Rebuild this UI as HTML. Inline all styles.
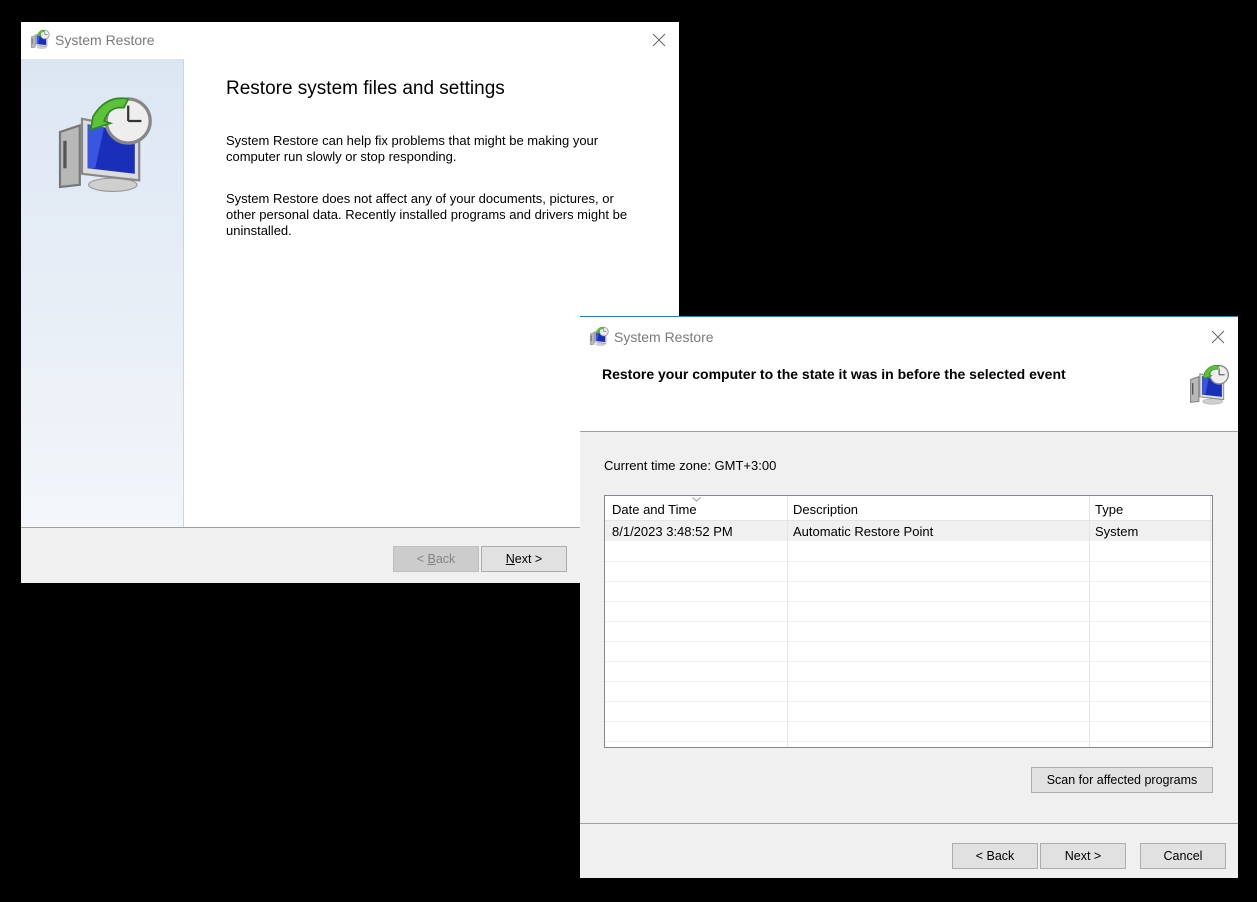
<!DOCTYPE html>
<html><head><meta charset="utf-8"><style>
*{margin:0;padding:0;box-sizing:border-box}
body{width:1257px;height:902px;background:#000;position:relative;overflow:hidden;font-family:"Liberation Sans",sans-serif;font-size:12px;color:#000}
.abs{position:absolute}
.btn{position:absolute;height:26px;background:#e1e1e1;border:1px solid #adadad;text-align:center;line-height:24px;font-size:12.5px}
.title{color:#7a7a7a;font-size:14px}
.gl{position:absolute;left:0;right:0;height:1px;background:#f0f0f0}
.t{font-size:13px}
</style></head><body>
<svg width="0" height="0" style="position:absolute"><defs>
<symbol id="ico" viewBox="0 0 100 100">
<path d="M10 40 L28 34 L28 88 L10 90 Z" fill="#b8b8b8" stroke="#777" stroke-width="2"/>
<rect x="13" y="48" width="3" height="25" fill="#555"/>
<ellipse cx="58" cy="88" rx="22" ry="6" fill="#cfcfcf" stroke="#999"/>
<path d="M30 28 L82 38 L82 84 L30 78 Z" fill="#ddd" stroke="#888" stroke-width="2"/>
<path d="M35 33 L78 41 L78 78 L35 73 Z" fill="#1a2fb8"/>
<path d="M35 33 L50 36 L42 73 L35 73 Z" fill="#3a55e0"/>
<circle cx="72" cy="30" r="20" fill="#eee" stroke="#888" stroke-width="3"/>
<path d="M72 30 L72 16 M72 30 L84 30" stroke="#333" stroke-width="2"/>
<path d="M40 26 Q52 6 72 10 L68 18 Q55 16 50 30 L56 32 L38 38 Z" fill="#5cc23a" stroke="#2f8a1e" stroke-width="1.5"/>
</symbol>
<symbol id="x" viewBox="0 0 14 14"><path d="M1 1 L13 13 M13 1 L1 13" stroke="#666" stroke-width="1"/></symbol>
</defs></svg>

<!-- Window 1 -->
<div class="abs" style="left:21px;top:22px;width:658px;height:561px;background:#fff">
  <svg class="abs" style="left:8px;top:6px" width="22" height="22"><use href="#ico"/></svg>
  <div class="abs title" style="left:34px;top:10px">System Restore</div>
  <svg class="abs" style="left:631px;top:11px" width="14" height="14"><use href="#x"/></svg>
  <div class="abs" style="left:0;top:37px;width:163px;height:468px;background:linear-gradient(#dce6f3,#f3f6fa);border-right:1px solid #c9d6e6"></div>
  <svg class="abs" style="left:28px;top:66px" width="110" height="110"><use href="#ico"/></svg>
  <div class="abs" style="left:205px;top:56px;font-size:19px;color:#000">Restore system files and settings</div>
  <div class="abs t" style="left:205px;top:111px;line-height:16px">System Restore can help fix problems that might be making your<br>computer run slowly or stop responding.</div>
  <div class="abs t" style="left:205px;top:169px;line-height:16px">System Restore does not affect any of your documents, pictures, or<br>other personal data. Recently installed programs and drivers might be<br>uninstalled.</div>
  <div class="abs" style="left:0;top:505px;width:658px;height:56px;background:#f0f0f0;border-top:1px solid #a0a0a0"></div>
  <div class="btn" style="left:372px;top:524px;width:86px;background:#ccc;border-color:#bfbfbf;color:#838383">&lt; <u>B</u>ack</div>
  <div class="btn" style="left:460px;top:524px;width:86px"><u>N</u>ext &gt;</div>
</div>

<!-- Window 2 -->
<div class="abs" style="left:580px;top:316px;width:658px;height:562px;background:#f0f0f0;border-top:1px solid #2d7fc0">
  <div class="abs" style="left:0;top:0;width:658px;height:115px;background:#fff;border-bottom:1px solid #a0a0a0"></div>
  <svg class="abs" style="left:8px;top:8px" width="22" height="22"><use href="#ico"/></svg>
  <div class="abs title" style="left:34px;top:12px">System Restore</div>
  <svg class="abs" style="left:631px;top:13px" width="14" height="14"><use href="#x"/></svg>
  <div class="abs" style="left:22px;top:49px;font-weight:bold;font-size:14px">Restore your computer to the state it was in before the selected event</div>
  <svg class="abs" style="left:606px;top:44px" width="46" height="46"><use href="#ico"/></svg>
  <div class="abs t" style="left:24px;top:141px">Current time zone: GMT+3:00</div>
  <div class="abs t" style="left:24px;top:178px;width:609px;height:253px;background:#fff;border:1px solid #828790;overflow:hidden">
    <div class="abs" style="left:0;top:0;width:607px;height:25px;border-bottom:1px solid #e5e5e5"></div>
    <div class="abs" style="left:0;top:25px;width:607px;height:20px;background:#f0f0f0"></div>
    <div class="gl" style="top:65px"></div><div class="gl" style="top:85px"></div><div class="gl" style="top:105px"></div><div class="gl" style="top:125px"></div><div class="gl" style="top:145px"></div><div class="gl" style="top:165px"></div><div class="gl" style="top:185px"></div><div class="gl" style="top:205px"></div><div class="gl" style="top:225px"></div><div class="gl" style="top:245px"></div>
    <div class="abs" style="left:182px;top:0;width:1px;height:253px;background:#e5e5e5"></div>
    <div class="abs" style="left:484px;top:0;width:1px;height:253px;background:#e5e5e5"></div>
    <div class="abs" style="left:605px;top:0;width:1px;height:253px;background:#e5e5e5"></div>
    <svg class="abs" style="left:87px;top:1px" width="9" height="5"><path d="M0.5 0.5 L4.5 4 L8.5 0.5" stroke="#999" fill="none"/></svg>
    <div class="abs" style="left:7px;top:6px">Date and Time</div>
    <div class="abs" style="left:188px;top:6px">Description</div>
    <div class="abs" style="left:490px;top:6px">Type</div>
    <div class="abs" style="left:7px;top:28px">8/1/2023 3:48:52 PM</div>
    <div class="abs" style="left:188px;top:28px">Automatic Restore Point</div>
    <div class="abs" style="left:490px;top:28px">System</div>
  </div>
  <div class="btn" style="left:451px;top:450px;width:182px">Scan for affected programs</div>
  <div class="abs" style="left:0;top:506px;width:658px;height:1px;background:#a0a0a0"></div>
  <div class="btn" style="left:372px;top:526px;width:86px">&lt; Back</div>
  <div class="btn" style="left:460px;top:526px;width:86px">Next &gt;</div>
  <div class="btn" style="left:560px;top:526px;width:86px">Cancel</div>
</div>
</body></html>
